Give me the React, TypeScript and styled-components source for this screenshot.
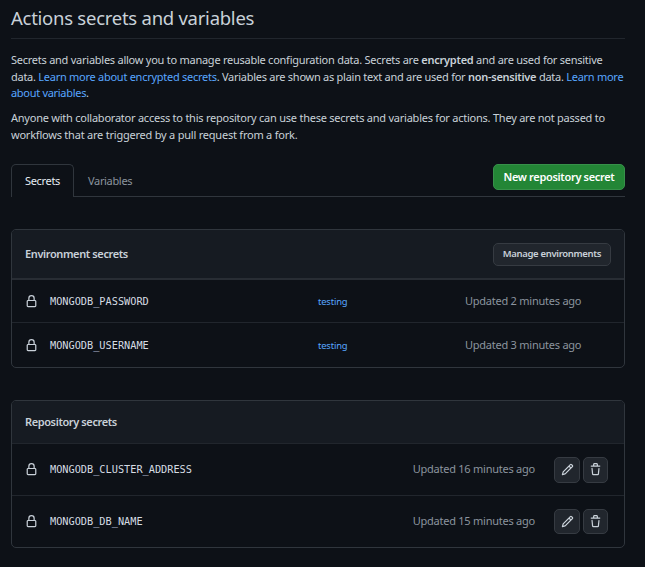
import React from "react";
import styled, { createGlobalStyle } from "styled-components";

const Global = createGlobalStyle`
  * { box-sizing: border-box; }
  html, body { margin: 0; background: #0d1117; }
  body {
    color: #c9d1d9;
    font-family: "Noto Sans", "Open Sans", sans-serif;
    font-size: 11px;
    line-height: 17px;
    letter-spacing: -0.24px;
    overflow: hidden;
  }
`;

const Page = styled.main`
  width: 645px;
  height: 567px;
  padding: 0 20px 0 11px;
  background: #0d1117;
  overflow: hidden;
`;

const Title = styled.h1`
  margin: 0;
  height: 39px;
  padding-top: 3px;
  border-bottom: 1px solid #21262d;
  font-size: 18.5px;
  font-weight: 400;
  line-height: 29px;
  letter-spacing: -0.26px;
`;

const Paragraph = styled.p<{ $top: number }>`
  margin: ${(p) => p.$top}px 0 0;
`;

const Line = styled.span<{ $track: number; $height?: number }>`
  display: block;
  height: ${(p) => p.$height ?? 17}px;
  white-space: nowrap;
  letter-spacing: ${(p) => p.$track}px;
`;

const Strong = styled.strong`
  font-weight: 600;
`;

const Link = styled.a`
  color: #58a6ff;
  text-decoration: none;
`;

const TabBar = styled.nav`
  display: flex;
  align-items: flex-start;
  height: 33px;
  margin-top: 21px;
  border-bottom: 1px solid #30363d;
`;

const Tab = styled.a<{ $active?: boolean }>`
  height: 33px;
  padding: 7px 13px 0;
  border: 1px solid ${(p) => (p.$active ? "#30363d" : "transparent")};
  border-bottom: 0;
  border-radius: 5px 5px 0 0;
  background: ${(p) => (p.$active ? "#0d1117" : "transparent")};
  color: ${(p) => (p.$active ? "#e6edf3" : "#8b949e")};
  white-space: nowrap;
  letter-spacing: -0.33px;
`;

const Button = styled.button<{ $primary?: boolean }>`
  flex: none;
  width: ${(p) => (p.$primary ? 132 : 118)}px;
  height: ${(p) => (p.$primary ? 26 : 23)}px;
  margin-left: auto;
  padding: 0;
  border: 1px solid ${(p) => (p.$primary ? "#37914a" : "#363b42")};
  border-radius: 5px;
  background: ${(p) => (p.$primary ? "#238636" : "#21262d")};
  color: ${(p) => (p.$primary ? "#ffffff" : "#c9d1d9")};
  font-family: inherit;
  font-size: ${(p) => (p.$primary ? 11 : 9.5)}px;
  font-weight: 600;
  line-height: 20px;
  letter-spacing: -0.33px;
  white-space: nowrap;
`;

const Box = styled.section`
  margin-top: 32px;
  border: 1px solid #30363d;
  border-radius: 5px;
  overflow: hidden;
`;

const BoxHeader = styled.header<{ $height: number; $heavy?: boolean }>`
  display: flex;
  align-items: center;
  height: ${(p) => p.$height}px;
  padding: 0 13px;
  border-bottom: ${(p) => (p.$heavy ? "2px solid #282d34" : "1px solid #21262d")};
  background: #161b22;
`;

const BoxTitle = styled.h2`
  margin: -1px 0 0;
  font-size: 11px;
  font-weight: 600;
  letter-spacing: -0.39px;
`;

const Row = styled.div<{ $height: number }>`
  display: flex;
  align-items: center;
  height: ${(p) => p.$height}px;
  padding-left: 13px;
  & + & {
    border-top: 1px solid #21262d;
  }
`;

const Svg = styled.svg`
  display: block;
  flex: none;
  width: 13px;
  height: 13px;
  fill: currentColor;
`;

const Name = styled.code`
  flex: none;
  width: 268px;
  margin-left: 12px;
  color: #d5dce3;
  font-family: "DejaVu Sans Mono", monospace;
  font-size: 10.25px;
  letter-spacing: 0;
`;

const EnvLink = styled(Link)`
  width: 147px;
  font-size: 9.4px;
  letter-spacing: -0.15px;
`;

const Updated = styled.span<{ $right?: boolean }>`
  padding-bottom: 2px;
  color: #8b949e;
  white-space: nowrap;
  margin-left: ${(p) => (p.$right ? "auto" : "0")};
`;

const Actions = styled.div`
  display: flex;
  gap: 3px;
  margin: 0 16px 0 19px;
`;

const IconButton = styled.button<{ $width: number; $height: number }>`
  display: flex;
  align-items: center;
  justify-content: center;
  width: ${(p) => p.$width}px;
  height: ${(p) => p.$height}px;
  padding: 0;
  border: 1px solid #363b42;
  border-radius: 5px;
  background: #21262d;
  color: #c9d1d9;
`;

const paths = {
  lock: "M4 4a4 4 0 0 1 8 0v2h.25c.966 0 1.75.784 1.75 1.75v5.5A1.75 1.75 0 0 1 12.25 15h-8.5A1.75 1.75 0 0 1 2 13.25v-5.5C2 6.784 2.784 6 3.75 6H4Zm8.25 3.5h-8.5a.25.25 0 0 0-.25.25v5.5c0 .138.112.25.25.25h8.5a.25.25 0 0 0 .25-.25v-5.5a.25.25 0 0 0-.25-.25ZM10.5 6V4a2.5 2.5 0 1 0-5 0v2Z",
  pencil:
    "M11.013 1.427a1.75 1.75 0 0 1 2.474 0l1.086 1.086a1.75 1.75 0 0 1 0 2.474l-8.61 8.61c-.21.21-.47.364-.756.445l-3.251.93a.75.75 0 0 1-.927-.928l.929-3.25c.081-.286.235-.547.445-.758l8.61-8.61Zm.176 4.823L9.75 4.81l-6.286 6.287a.253.253 0 0 0-.064.108l-.558 1.953 1.953-.558a.253.253 0 0 0 .108-.064Zm1.238-3.763a.25.25 0 0 0-.354 0L10.811 3.75l1.439 1.44 1.263-1.263a.25.25 0 0 0 0-.354Z",
  trash:
    "M11 1.75V3h2.25a.75.75 0 0 1 0 1.5H2.75a.75.75 0 0 1 0-1.5H5V1.75C5 .784 5.784 0 6.75 0h2.5C10.216 0 11 .784 11 1.75ZM4.496 6.675l.66 6.6a.25.25 0 0 0 .249.225h5.19a.25.25 0 0 0 .249-.225l.66-6.6a.75.75 0 0 1 1.492.149l-.66 6.6A1.748 1.748 0 0 1 10.595 15h-5.19a1.75 1.75 0 0 1-1.741-1.575l-.66-6.6a.75.75 0 1 1 1.492-.15ZM6.5 1.75V3h3V1.75a.25.25 0 0 0-.25-.25h-2.5a.25.25 0 0 0-.25.25Z",
};

const Icon = ({ name }: { name: keyof typeof paths }) => (
  <Svg viewBox="0 0 16 16" aria-hidden="true">
    <path d={paths[name]} />
  </Svg>
);

const environmentSecrets = [
  { name: "MONGODB_PASSWORD", env: "testing", updated: "Updated 2 minutes ago", height: 42 },
  { name: "MONGODB_USERNAME", env: "testing", updated: "Updated 3 minutes ago", height: 45 },
];

const repositorySecrets = [
  { name: "MONGODB_CLUSTER_ADDRESS", updated: "Updated 16 minutes ago", height: 51, button: 26 },
  { name: "MONGODB_DB_NAME", updated: "Updated 15 minutes ago", height: 52, button: 25 },
];

export default function App() {
  return (
    <>
      <Global />
      <Page>
        <Title>Actions secrets and variables</Title>
        <Paragraph $top={12}>
          <Line $track={-0.25}>
            Secrets and variables allow you to manage reusable configuration data. Secrets are{" "}
            <Strong>encrypted</Strong> and are used for sensitive
          </Line>
          <Line $track={-0.265} $height={16}>
            data. <Link>Learn more about encrypted secrets</Link>. Variables are shown as plain text
            and are used for <Strong>non-sensitive</Strong> data. <Link>Learn more</Link>
          </Line>
          <Line $track={-0.3}>
            <Link>about variables</Link>.
          </Line>
        </Paragraph>
        <Paragraph $top={8}>
          <Line $track={-0.235}>
            Anyone with collaborator access to this repository can use these secrets and variables
            for actions. They are not passed to
          </Line>
          <Line $track={-0.22}>workflows that are triggered by a pull request from a fork.</Line>
        </Paragraph>
        <TabBar>
          <Tab $active>Secrets</Tab>
          <Tab>Variables</Tab>
          <Button $primary>New repository secret</Button>
        </TabBar>
        <Box>
          <BoxHeader $height={50} $heavy>
            <BoxTitle>Environment secrets</BoxTitle>
            <Button>Manage environments</Button>
          </BoxHeader>
          {environmentSecrets.map((s) => (
            <Row key={s.name} $height={s.height}>
              <Icon name="lock" />
              <Name>{s.name}</Name>
              <EnvLink>{s.env}</EnvLink>
              <Updated>{s.updated}</Updated>
            </Row>
          ))}
        </Box>
        <Box>
          <BoxHeader $height={43}>
            <BoxTitle>Repository secrets</BoxTitle>
          </BoxHeader>
          {repositorySecrets.map((s) => (
            <Row key={s.name} $height={s.height}>
              <Icon name="lock" />
              <Name>{s.name}</Name>
              <Updated $right>{s.updated}</Updated>
              <Actions>
                <IconButton $width={26} $height={s.button} aria-label="Edit secret">
                  <Icon name="pencil" />
                </IconButton>
                <IconButton $width={25} $height={s.button} aria-label="Delete secret">
                  <Icon name="trash" />
                </IconButton>
              </Actions>
            </Row>
          ))}
        </Box>
      </Page>
    </>
  );
}
